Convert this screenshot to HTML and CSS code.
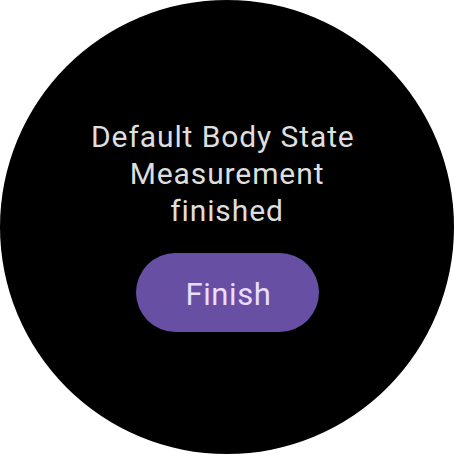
FILE: index.html
```html
<!DOCTYPE html>
<html>
<head>
<meta charset="utf-8">
<link rel="stylesheet" href="styles.css">
</head>
<body>
<div class="screen">
  <div class="content">
    <p class="message">Default Body State&nbsp;<br>Measurement<br>finished</p>
    <button class="finish">Finish</button>
  </div>
</div>
</body>
</html>
```

FILE: styles.css
```css
html, body {
  margin: 0;
  padding: 0;
  background: #ffffff;
}
.screen {
  width: 454px;
  height: 454px;
  border-radius: 50%;
  background: #000000;
  display: flex;
  justify-content: center;
  font-family: Roboto, "Noto Sans", sans-serif;
}
.content {
  display: flex;
  flex-direction: column;
  align-items: center;
  padding-top: 118px;
}
.message {
  margin: 0;
  color: #dedede;
  font-size: 30px;
  line-height: 37px;
  letter-spacing: 0.9px;
  text-align: center;
}
.finish {
  margin-top: 24px;
  width: 183px;
  height: 79px;
  border: none;
  border-radius: 40px;
  background: #6750a4;
  color: #eaddff;
  font-family: Roboto, "Noto Sans", sans-serif;
  font-size: 31px;
  letter-spacing: 0.6px;
  padding: 4px 0 0 3px;
}
```
